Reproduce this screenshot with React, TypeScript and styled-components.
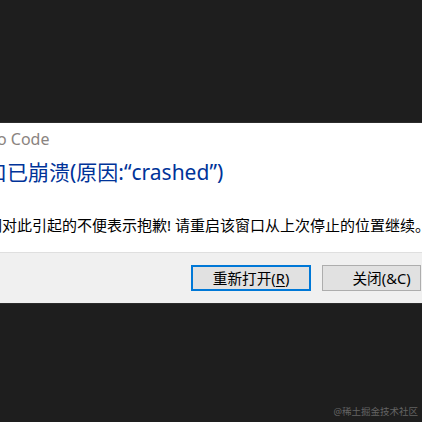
import React from "react";
import styled, { createGlobalStyle } from "styled-components";

const Global = createGlobalStyle`
  html, body {
    margin: 0;
    padding: 0;
    background: #1e1e1e;
  }
  #root {
    width: 422px;
    height: 422px;
  }
`;

const Page = styled.div`
  position: relative;
  width: 422px;
  height: 422px;
  box-sizing: border-box;
  padding-top: 122px;
  background: #1e1e1e;
  overflow: hidden;
  font-family: "Noto Sans", "Noto Sans CJK SC", sans-serif;
`;

const Dialog = styled.div`
  display: flex;
  flex-direction: column;
  width: 422px;
  border-top: 1px solid #2c2c2c;
  border-bottom: 1px solid #2c2c2c;
  overflow: hidden;
`;

const Content = styled.div`
  display: flex;
  flex-direction: column;
  height: 129px;
  box-sizing: border-box;
  padding-top: 5px;
  background: #ffffff;
`;

const Title = styled.div<{ $shift: number }>`
  margin-left: ${(p) => p.$shift}px;
  font-size: 16px;
  line-height: 22px;
  color: #8a8480;
  white-space: nowrap;
`;

const Heading = styled.div<{ $shift: number }>`
  margin-top: 8px;
  margin-left: ${(p) => p.$shift}px;
  font-size: 21px;
  line-height: 29px;
  color: #003399;
  white-space: nowrap;
`;

const Message = styled.div<{ $shift: number }>`
  margin-top: 28px;
  margin-left: ${(p) => p.$shift}px;
  font-size: 15px;
  line-height: 20px;
  color: #000000;
  white-space: nowrap;
`;

const Footer = styled.div`
  display: flex;
  align-items: center;
  justify-content: flex-end;
  gap: 11px;
  height: 50px;
  padding-right: 1px;
  border-top: 1px solid #dfdfdf;
  background: #f0f0f0;
`;

const Button = styled.div<{ $primary?: boolean; $width: number; $indent?: number }>`
  display: flex;
  align-items: center;
  justify-content: center;
  box-sizing: border-box;
  width: ${(p) => p.$width}px;
  height: 26px;
  padding-left: ${(p) => p.$indent ?? 0}px;
  background: #e1e1e1;
  border: ${(p) => (p.$primary ? "2px solid #0078d7" : "1px solid #adadad")};
  font-size: 14.667px;
  line-height: 20px;
  color: #000000;
  white-space: nowrap;
`;

const Mnemonic = styled.span`
  text-decoration: underline;
  text-underline-offset: 2px;
`;

const Watermark = styled.div`
  position: absolute;
  right: 4px;
  bottom: 3px;
  font-size: 9.5px;
  line-height: 14px;
  color: #646464;
`;

export default function App() {
  return (
    <>
      <Global />
      <Page>
        <Dialog>
          <Content>
            <Title $shift={-90}>Visual Studio Code</Title>
            <Heading $shift={-35}>窗口已崩溃(原因:“crashed”)</Heading>
            <Message $shift={-28}>
              我们对此引起的不便表示抱歉! 请重启该窗口从上次停止的位置继续。
            </Message>
          </Content>
          <Footer>
            <Button $primary $width={120}>
              重新打开(<Mnemonic>R</Mnemonic>)
            </Button>
            <Button $width={99} $indent={20}>
              关闭(&amp;C)
            </Button>
          </Footer>
        </Dialog>
        <Watermark>@稀土掘金技术社区</Watermark>
      </Page>
    </>
  );
}
